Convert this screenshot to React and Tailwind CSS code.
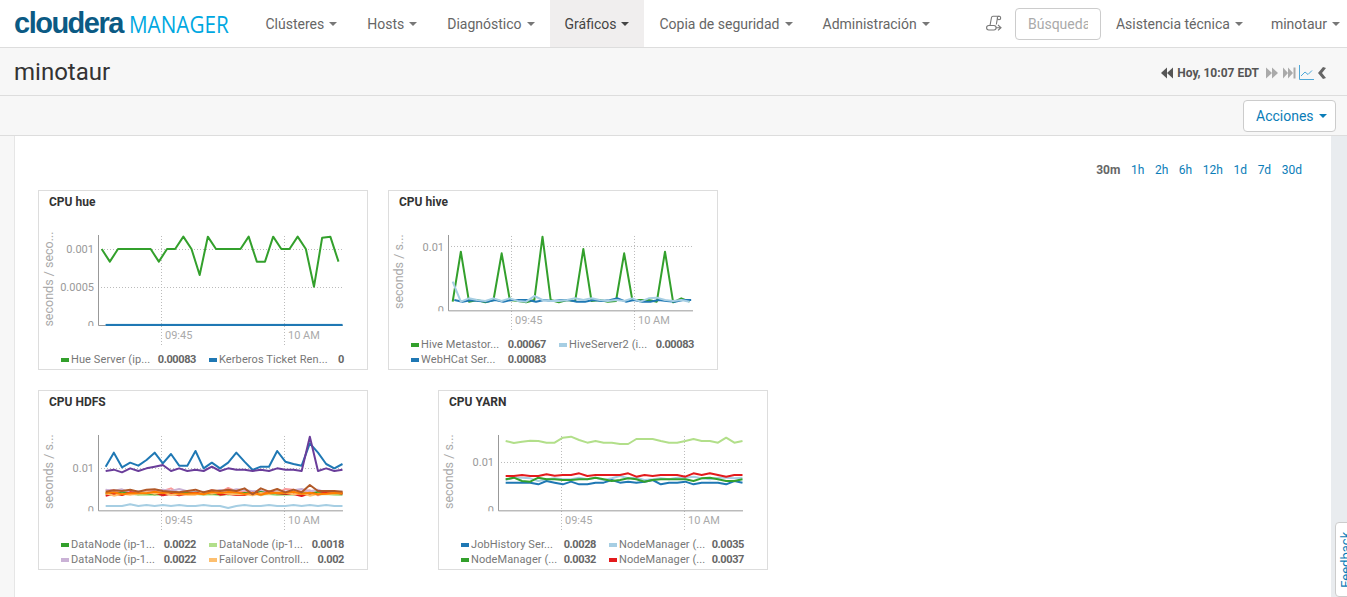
const FONT = { fontFamily: 'Roboto, sans-serif' };

const GREEN = '#33a02c';
const LIGHT_BLUE = '#a6cee3';
const BLUE = '#1f78b4';
const LIGHT_GREEN = '#b2df8a';
const LILAC = '#cab2d6';
const ORANGE = '#fdbf6f';
const RED = '#e31a1c';
const PURPLE = '#6a3d9a';
const PINK = '#fb9a99';
const DARK_ORANGE = '#ff7f00';
const BROWN = '#b15928';

// y values were read from the picture at 3x, so they are divided back here
const toPoints = (ys, x0 = 227) =>
  ys.map((y, i) => `${(x0 + i * 24.5) / 3 - 8},${y / 3 - 5}`).join(' ');

const wiggle = (base, amp, seed) =>
  Array.from({ length: 30 }, (_, i) =>
    Math.round(base + amp * Math.sin(i * 1.7 + seed) * Math.cos(i * 0.9 + seed * 2)));

const charts = {
  hue: {
    title: 'CPU hue',
    yLabel: 'seconds / seco...',
    axis: 420,
    yTicks: [['0.001', 192], ['0.0005', 306], ['0', 420]],
    lines: [
      { color: GREEN, x0: 215, ys: [192, 230, 192, 192, 192, 192, 192, 230, 192, 192, 155, 192, 270, 155, 192, 192, 192, 192, 155, 230, 230, 155, 192, 192, 155, 192, 305, 158, 155, 230] },
      { color: LIGHT_BLUE, ys: Array(30).fill(419) },
      { color: BLUE, ys: Array(30).fill(420) },
    ],
    legend: [
      [GREEN, 'Hue Server (ip...', '0.00083'],
      [BLUE, 'Kerberos Ticket Ren...', '0'],
    ],
  },
  hive: {
    title: 'CPU hive',
    yLabel: 'seconds / s...',
    axis: 376,
    yTicks: [['0.01', 185], ['0', 376]],
    lines: [
      { color: GREEN, x0: 218, ys: [350, 200, 350, 345, 352, 345, 205, 345, 348, 352, 345, 155, 345, 352, 345, 348, 192, 348, 345, 350, 348, 205, 345, 345, 345, 350, 200, 352, 340, 350] },
      { color: BLUE, x0: 223, ys: [345, 350, 346, 348, 350, 345, 350, 345, 345, 345, 350, 345, 348, 346, 345, 350, 350, 345, 348, 346, 340, 350, 345, 350, 350, 345, 348, 350, 345, 345] },
      { color: LIGHT_BLUE, x0: 218, ys: [290, 350, 340, 345, 348, 340, 348, 340, 348, 350, 333, 345, 348, 348, 345, 340, 345, 340, 345, 348, 345, 348, 340, 350, 340, 338, 345, 348, 345, 350] },
    ],
    legend: [
      [GREEN, 'Hive Metastor...', '0.00067'],
      [LIGHT_BLUE, 'HiveServer2 (i...', '0.00083'],
      [BLUE, 'WebHCat Ser...', '0.00083'],
    ],
  },
  hdfs: {
    title: 'CPU HDFS',
    yLabel: 'seconds / s...',
    axis: 376,
    yTicks: [['0.01', 250], ['0', 376]],
    lines: [
      { color: LIGHT_BLUE, ys: [363, 363, 363, 358, 363, 360, 363, 360, 363, 360, 363, 363, 360, 363, 363, 369, 363, 360, 363, 363, 360, 363, 363, 360, 363, 360, 363, 360, 363, 363] },
      { color: PINK, ys: wiggle(320, 12, 1) },
      { color: LILAC, ys: wiggle(318, 7, 2) },
      { color: LIGHT_GREEN, ys: wiggle(328, 3, 3) },
      { color: GREEN, ys: wiggle(325, 4, 4) },
      { color: RED, ys: wiggle(326, 7, 5) },
      { color: ORANGE, ys: wiggle(326, 6, 6) },
      { color: DARK_ORANGE, ys: wiggle(324, 5, 7) },
      { color: BROWN, ys: [320, 316, 318, 314, 320, 314, 313, 318, 320, 322, 318, 314, 322, 316, 318, 314, 318, 310, 328, 310, 320, 312, 322, 314, 322, 300, 318, 318, 318, 320] },
      { color: BLUE, ys: [245, 203, 247, 233, 242, 225, 203, 235, 207, 242, 242, 198, 250, 233, 250, 233, 203, 230, 255, 245, 245, 198, 230, 237, 242, 175, 203, 237, 250, 237] },
      { color: PURPLE, ys: [258, 254, 262, 250, 258, 250, 245, 240, 258, 250, 258, 254, 258, 245, 258, 250, 254, 254, 258, 254, 258, 250, 254, 254, 258, 155, 258, 250, 258, 254] },
    ],
    legend: [
      [GREEN, 'DataNode (ip-1...', '0.0022'],
      [LIGHT_GREEN, 'DataNode (ip-1...', '0.0018'],
      [LILAC, 'DataNode (ip-1...', '0.0022'],
      [ORANGE, 'Failover Controll...', '0.002'],
    ],
  },
  yarn: {
    title: 'CPU YARN',
    yLabel: 'seconds / s...',
    axis: 376,
    yTicks: [['0.01', 231], ['0', 376]],
    lines: [
      { color: LIGHT_GREEN, ys: [168, 174, 170, 167, 168, 173, 173, 158, 155, 165, 173, 168, 173, 173, 177, 177, 162, 162, 162, 168, 173, 173, 168, 162, 168, 168, 173, 158, 173, 168] },
      { color: LIGHT_BLUE, ys: [285, 278, 278, 280, 288, 283, 280, 283, 283, 278, 283, 278, 285, 280, 273, 280, 278, 285, 283, 280, 283, 278, 278, 275, 280, 283, 278, 278, 280, 278] },
      { color: BLUE, ys: [293, 293, 293, 293, 298, 288, 293, 298, 290, 298, 298, 293, 293, 285, 293, 290, 293, 290, 285, 298, 293, 293, 290, 298, 293, 293, 293, 298, 288, 293] },
      { color: GREEN, ys: [283, 278, 288, 290, 278, 283, 283, 285, 285, 283, 283, 278, 283, 288, 285, 280, 283, 290, 285, 283, 283, 283, 283, 288, 280, 278, 283, 288, 288, 283] },
      { color: RED, ys: [273, 273, 270, 273, 273, 268, 272, 270, 270, 265, 273, 270, 270, 270, 270, 265, 275, 270, 273, 270, 270, 270, 275, 265, 270, 265, 270, 275, 270, 270] },
    ],
    legend: [
      [BLUE, 'JobHistory Ser...', '0.0028'],
      [LIGHT_BLUE, 'NodeManager (...', '0.0035'],
      [GREEN, 'NodeManager (...', '0.0032'],
      [RED, 'NodeManager (...', '0.0037'],
    ],
  },
};

function Caret({ className = 'border-t-[#777]' }) {
  return <span className={`inline-block ml-[5px] w-0 h-0 border-x-4 border-x-transparent border-t-4 ${className}`} />;
}

function NavItem({ label, active }) {
  return (
    <div className={`h-full px-[15px] flex items-center text-sm whitespace-nowrap ${active ? 'bg-[#f0eeee] text-[#444]' : 'text-[#666]'}`}>
      {label}
      <Caret className={active ? 'border-t-[#444]' : 'border-t-[#777]'} />
    </div>
  );
}

function ChartCard({ chart }) {
  const { title, yLabel, axis, yTicks, lines, legend } = chart;
  const axisY = axis / 3 - 5;
  const svgH = axisY - 1;
  const clipId = `clip-${title.replace(' ', '')}`;
  const labelMid = (45 + axisY) / 2 - 1;
  return (
    <div className="w-[330px] h-[180px] shrink-0 border border-[#ddd] bg-white flex flex-col" style={FONT}>
      <div className="h-[21px] shrink-0 pl-[10px] pt-[4px] text-xs font-bold text-[#333] leading-[15px]">{title}</div>
      <svg width="328" height={svgH} viewBox={`1 22 328 ${svgH}`} className="block shrink-0" style={FONT}>
        <defs>
          <clipPath id={clipId}><rect x="0" y="0" width="330" height={axisY + 1} /></clipPath>
        </defs>
        {yTicks.slice(0, -1).map(([t, y]) => (
          <line key={t} x1="60" x2="305" y1={Math.floor(y / 3 - 5) + 0.5} y2={Math.floor(y / 3 - 5) + 0.5} stroke="#bbb" strokeDasharray="1 2" />
        ))}
        {[123.5, 246.5].map((x) => (
          <line key={x} x1={x} x2={x} y1="46" y2={axisY + 20} stroke="#bbb" strokeDasharray="1 2" />
        ))}
        <path d={`M60.5 45V${axisY + 0.5}H305`} fill="none" stroke="#999" />
        {lines.map((l, i) => (
          <polyline key={i} points={toPoints(l.ys, l.x0 ?? 227)} fill="none" stroke={l.color} strokeWidth="2" strokeLinejoin="round" />
        ))}
        <g clipPath={`url(#${clipId})`}>
          {yTicks.map(([t, y]) => (
            <text key={t} x="56" y={y / 3 - 5 + 4} textAnchor="end" fontSize="11" fill="#999">{t}</text>
          ))}
        </g>
        <text x="127" y={axisY + 14} fontSize="11" fill="#aaa">09:45</text>
        <text x="250" y={axisY + 14} fontSize="11" fill="#aaa">10 AM</text>
        <text transform={`translate(14.500 ${labelMid}) rotate(-90)`} textAnchor="middle" fontSize="12.500" fill="#aaa">{yLabel}</text>
      </svg>
      <div className="mt-auto mb-[2px] pl-[22px] w-[305px] grid grid-cols-2 gap-x-[13px] text-[11px] leading-[15px] text-[#777]">
        {legend.map(([color, label, value], i) => (
          <div key={i} className="flex items-center whitespace-nowrap">
            <span className="w-2 h-1 mr-[2px] shrink-0" style={{ backgroundColor: color }} />
            <span className="flex-1 overflow-hidden tracking-[0.1px]">{label}</span>
            <span className="font-bold text-[#666] tracking-[-0.4px]">{value}</span>
          </div>
        ))}
      </div>
    </div>
  );
}

function ScriptIcon() {
  return (
    <svg width="16" height="17" viewBox="0 0 16 17" fill="none" stroke="#777" strokeWidth="1.100">
      <path d="M4 10.500L5.500 2.500a1.500 1.500 0 0 1 1.500-1.200h6.500" />
      <circle cx="13" cy="3" r="1.700" />
      <path d="M11.500 3L10.300 9.500" />
      <rect x="0.600" y="10.500" width="9.500" height="4.500" rx="2.200" />
      <path d="M10 12.700h4M12 10l3 2.700-3 2.700" />
    </svg>
  );
}

function TimeControls() {
  return (
    <div className="flex items-center mt-[3px] text-xs font-bold text-[#555]">
      <svg width="13" height="12" viewBox="0 0 13 12" fill="#555" className="mr-[3px]">
        <polygon points="6,0.500 6,11.500 0,6" /><polygon points="12,0.500 12,11.500 6,6" />
      </svg>
      <span className="mb-[1px]">Hoy, 10:07 EDT</span>
      <svg width="12" height="12" viewBox="0 0 12 12" fill="#aaa" className="ml-[7px]">
        <polygon points="0,0.500 0,11.500 6,6" /><polygon points="6,0.500 6,11.500 12,6" />
      </svg>
      <svg width="13" height="12" viewBox="0 0 13 12" fill="#aaa" className="ml-[5px]">
        <polygon points="0,0.500 0,11.500 5,6" /><polygon points="5,0.500 5,11.500 10,6" /><rect x="10.500" y="0.500" width="2" height="11" />
      </svg>
      <svg width="15" height="15" viewBox="0 0 15 15" fill="none" stroke="#4fa8d8" className="ml-[3px] mb-[1px]">
        <path d="M0.500 0v14.500H15" />
        <path d="M2 11l4-4 3 2.500 4-4" />
      </svg>
      <svg width="9" height="12" viewBox="0 0 9 12" fill="#666" className="ml-[4px]">
        <polygon points="8,1 5,0 0,6 5,12 8,11 4,6" />
      </svg>
    </div>
  );
}

export default function App() {
  return (
    <div className="h-screen overflow-hidden relative flex flex-col bg-white" style={FONT}>
      <header className="h-[48px] shrink-0 flex items-center border-b border-[#ddd] bg-white pl-[14px]">
        <div className="w-[236.500px] shrink-0 flex items-baseline">
          <span className="text-[29px] font-bold tracking-[-1.500px] text-[#0b5a84]" style={{ fontFamily: '"Liberation Sans", sans-serif' }}>cloudera</span>
          <span className="ml-[6px] text-[23px] font-medium text-[#00a8e1] origin-left scale-x-[0.9]" style={{ fontFamily: '"Open Sans", sans-serif' }}>MANAGER</span>
        </div>
        <nav className="h-full flex">
          <NavItem label="Clústeres" />
          <NavItem label="Hosts" />
          <NavItem label="Diagnóstico" />
          <NavItem label="Gráficos" active />
          <NavItem label="Copia de seguridad" />
          <NavItem label="Administración" />
        </nav>
        <div className="ml-auto h-full flex items-center">
          <ScriptIcon />
          <div className="ml-[13px] w-[86px] h-[32px] border border-[#ccc] rounded pl-[12px] flex items-center text-sm text-[#aaa]">
            <span className="w-[60px] overflow-hidden whitespace-nowrap">Búsqueda</span>
          </div>
          <div className="ml-[15px] flex items-center text-sm text-[#666] whitespace-nowrap">Asistencia técnica<Caret /></div>
          <div className="ml-[28px] mr-[7px] flex items-center text-sm text-[#666] whitespace-nowrap">minotaur<Caret /></div>
        </div>
      </header>

      <div className="h-[48px] shrink-0 flex items-center justify-between bg-[#f7f7f7] border-b border-[#ddd] pl-[14px] pr-[20px]">
        <h1 className="text-2xl text-[#333]">minotaur</h1>
        <TimeControls />
      </div>

      <div className="h-[40px] shrink-0 flex items-center justify-end bg-[#f7f7f7] border-b border-[#ddd] pr-[11px]">
        <div className="w-[93px] h-[32px] border border-[#ccc] rounded bg-white flex items-center pl-[12px] text-sm text-[#0a7db8]">
          Acciones
          <Caret className="border-t-[#0a7db8]" />
        </div>
      </div>

      <main className="flex-1 flex min-h-0">
        <div className="w-[15px] shrink-0 bg-[#f7f7f7] border-r border-[#e6e6e6]" />
        <div className="flex-1 bg-white pl-[23px] pr-[29px] pt-[27px]">
          <div className="h-[14px] flex justify-end items-center gap-[10.600px] text-xs text-[#0a7db8]">
            <span className="font-bold text-[#666]">30m</span>
            <span>1h</span>
            <span>2h</span>
            <span>6h</span>
            <span>12h</span>
            <span>1d</span>
            <span>7d</span>
            <span>30d</span>
          </div>
          <div className="mt-[13px] flex gap-[20px]">
            <ChartCard chart={charts.hue} />
            <ChartCard chart={charts.hive} />
          </div>
          <div className="mt-[20px] flex gap-[70px]">
            <ChartCard chart={charts.hdfs} />
            <ChartCard chart={charts.yarn} />
          </div>
        </div>
        <div className="w-[16px] shrink-0 bg-[#e9ecef]" />
      </main>

      <div className="absolute right-[-8px] top-[522px] w-[20px] h-[75px] pl-[1px] bg-white border border-[#ccc] rounded flex items-center justify-center">
        <span className="-rotate-90 text-[13px] text-[#0a7db8] whitespace-nowrap">Feedback</span>
      </div>
    </div>
  );
}
